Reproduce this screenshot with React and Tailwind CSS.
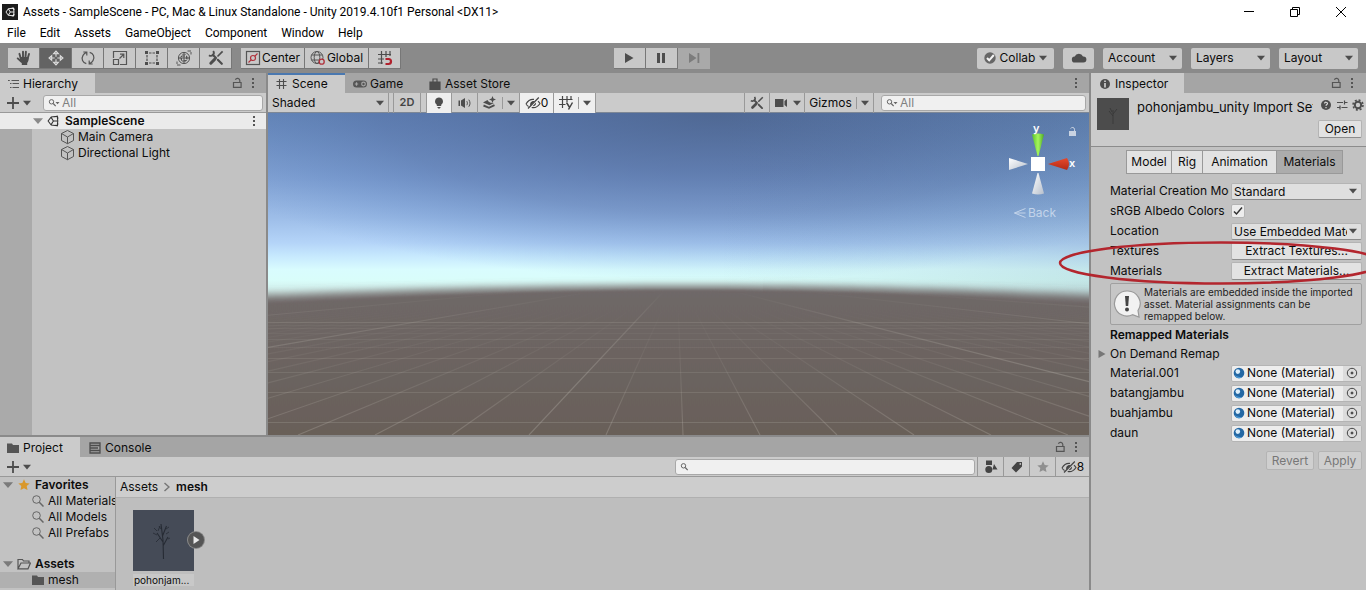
import React from "react";

/* ---------- icons ---------- */

function Svg({ children, className = "size-4", box = "0 0 16 16", sw = 1.2 }) {
  return (
    <svg
      viewBox={box}
      className={`shrink-0 ${className}`}
      fill="none"
      stroke="currentColor"
      strokeWidth={sw}
      aria-hidden="true"
    >
      {children}
    </svg>
  );
}

const Caret = ({ className = "w-2 h-2 text-[#4d4d4d]" }) => (
  <Svg box="0 0 8 8" className={className}>
    <path d="M0 1.8h8L4 6.4z" fill="currentColor" stroke="none" />
  </Svg>
);

const Dots = () => (
  <Svg className="size-4 text-[#555]">
    <g fill="currentColor" stroke="none">
      <rect x="7" y="3" width="2" height="2" />
      <rect x="7" y="7" width="2" height="2" />
      <rect x="7" y="11" width="2" height="2" />
    </g>
  </Svg>
);

const Lock = () => (
  <Svg className="size-4 text-[#555]">
    <path d="M4.5 7.5h7.6v4.9H4.5zM10.8 7.5V5.6a2.3 2.3 0 0 0-4.4-.9" />
  </Svg>
);

const HandIcon = () => (
  <Svg className="size-4 text-[#4d4d4d]" sw={1.9}>
    <path d="M4.9 9 3.4 3.8M7 8V1.6M9.4 8l.5-6.2M11.5 9l1.5-5M5.2 11.6 1.7 8.4" strokeLinecap="round" />
    <path d="M4.2 7h8.2c.6 2.500 0 4.600-1.200 5.900v2.100H5.800v-1.700c-1-1.200-2-3.700-1.600-6.300z" fill="currentColor" stroke="none" />
  </Svg>
);

const MoveIcon = () => (
  <Svg className="size-4 text-[#dcdcdc]" sw={1.1}>
    <path d="M8 3.500v9M3.500 8h9" strokeDasharray="3.200 2.600" />
    <path d="M5.600 3.700 8 1l2.400 2.700zM5.600 12.300 8 15l2.400-2.700zM3.700 5.600 1 8l2.700 2.400zM12.300 5.600 15 8l-2.700 2.400z" fill="currentColor" fillOpacity=".5" />
  </Svg>
);

const RotateIcon = () => (
  <Svg className="size-4 text-[#555]">
    <path d="M6.300 13.600C2.700 12.600.9 9 3 5.400 3.800 4 5 3 6.600 2.400M3.300 2h3.500v3.500M9.700 2.400c3.600 1 5.400 4.600 3.300 8.200-.8 1.400-2 2.400-3.600 3M12.700 14H9.200v-3.500" />
  </Svg>
);

const ScaleIcon = () => (
  <Svg className="size-4 text-[#555]">
    <path d="M1.500 8V1.500h13v13H8M1.500 9.500h5v5h-5zM7.500 8.500l4-4M8 4.200h3.800V8" />
  </Svg>
);

const RectIcon = () => (
  <Svg className="size-4 text-[#4d4d4d]">
    <path d="M3 5v6M13 5v6M5 3h6M5 13h6" strokeDasharray="2.500 1" />
    <path d="M1 1h3v3H1zM12 1h3v3h-3zM1 12h3v3H1zM12 12h3v3h-3z" fill="currentColor" stroke="none" />
  </Svg>
);

const TransformIcon = () => (
  <Svg className="size-4 text-[#555]" sw={1}>
    <circle cx="8" cy="8" r="5.600" />
    <path d="M8 3.500v9M3.500 8h9M6.500 5 8 3.500 9.500 5M6.500 11 8 12.500 9.500 11M5 6.500 3.500 8 5 9.500M11 6.500 12.500 8 11 9.500" />
    <path d="M11.500 1H15v3.500M4.500 15H1v-3.500M5.500 6h5v4.500h-5z" strokeDasharray="3.500 1" />
  </Svg>
);

const ToolsIcon = ({ className = "size-4 text-[#4d4d4d]" }) => (
  <Svg className={className} sw={2.200}>
    <path d="m5 5 3 3M9.800 9.800l4 4" strokeLinecap="round" />
    <path d="M14.600 1.400 9.500 6.500" strokeWidth="1.700" />
    <path d="m6.600 9.400-3.800 3.800" strokeWidth="3" strokeLinecap="round" />
    <path d="M5.200 1a3 3 0 0 1-4.200 4.200M4.600 4.600l1 1" strokeWidth="1.800" />
  </Svg>
);

const PivotIcon = () => (
  <Svg className="size-4 text-[#555]">
    <rect x="1.500" y="1.500" width="13" height="13" />
    <path d="m3.500 12.500 2.800-2.800M9.700 6.300l2.800-2.800" className="stroke-[#b0303a]" />
    <circle cx="8" cy="8" r="2.500" className="stroke-[#b0303a]" />
  </Svg>
);

const GlobeIcon = () => (
  <Svg className="size-4 text-[#555]" sw={1}>
    <circle cx="7" cy="7.500" r="6" />
    <ellipse cx="7" cy="7.500" rx="2.800" ry="6" />
    <path d="M1.500 5h11M1.500 10h8" />
    <circle cx="11.700" cy="11.700" r="2.500" className="fill-[#c8c8c8] stroke-[#b0303a]" strokeWidth="1.300" />
  </Svg>
);

const SnapIcon = () => (
  <Svg className="size-4 text-[#4d4d4d]">
    <path d="M4.500 1v13M9 1v6M13 1v5M1 4.500h13M1 9h6M1 13h5" />
    <path d="M8.500 9h3a2.400 2.400 0 0 1 0 5h-3" className="stroke-[#b0202c]" strokeWidth="2.200" />
  </Svg>
);

const HierarchyIcon = () => (
  <Svg className="size-3 text-[#555]" box="0 0 12 12" sw={1}>
    <path d="M3.500 2.500H11M4.500 5.500H11M4.500 9.500H11M0 2.500h1.800M2 5.500h1.500M2 9.500h1.500" />
  </Svg>
);

const PlusMenu = ({ label }) => (
  <button type="button" aria-label={label} className="flex items-center gap-1 text-[#4d4d4d]">
    <Svg className="size-3" box="0 0 12 12" sw={1.800}>
      <path d="M6 0v12M0 6h12" />
    </Svg>
    <Caret />
  </button>
);

const Magnifier = ({ menu = false }) => (
  <Svg className="w-3 h-3 text-[#666]" box="0 0 12 12" sw={1}>
    <circle cx="3.500" cy="4.800" r="2.200" />
    <path d="m5.200 6.500 2.500 2.700" strokeWidth="1.200" />
    {menu && <path d="M7.500 5h4L9.500 7.200z" fill="currentColor" stroke="none" />}
  </Svg>
);

const UnityIcon = ({ className }) => (
  <Svg className={className} sw={1.400}>
    <path d="M8.500 8h6M8.500 8 5.300 2.800M8.500 8l-3.200 5.200M10.500 2.200l3.300-.6.9 3.400M10.500 13.800l3.300.6.9-3.400M5.500 2.700 1.500 8l4 5.300M13.600 1.800 14.400 8l-.8 6.200M5.300 2.800l8.300-1M5.300 13.200l8.300 1" />
  </Svg>
);

const CubeIcon = () => (
  <Svg className="size-4 text-[#555]" sw={1}>
    <path d="M7.500 1.500 13.500 4.500v7L7.500 14.700 1.500 11.500v-7zM1.500 4.500 7.500 8l6-3.500M7.500 8v6.700" />
  </Svg>
);

const GridIcon = () => (
  <Svg className="size-3 text-[#4d4d4d]" box="0 0 12 12" sw={1.100}>
    <path d="M3.500 1v10M7.500 1v10M.5 3.500h10M.5 7.500h10" />
  </Svg>
);

const GameIcon = () => (
  <Svg className="w-4 h-4 text-[#555]">
    <rect x="1" y="4.500" width="14" height="7" rx="3.500" fill="currentColor" stroke="none" />
    <path d="M2.800 8h3.400M4.500 6.300v3.400" className="stroke-[#a5a5a5]" />
    <circle cx="11.500" cy="8" r="1.800" className="stroke-[#a5a5a5]" />
  </Svg>
);

const StoreIcon = () => (
  <Svg className="size-3 text-[#4d4d4d]" box="0 0 12 12">
    <path d="M1 4h10v7.500H1z" fill="currentColor" />
    <path d="M4 4V1h4v3" />
  </Svg>
);

const BulbIcon = () => (
  <Svg className="size-4 text-[#4d4d4d]">
    <path d="M8 2.500a4 4 0 0 0-2.200 7.300V11h4.400V9.800A4 4 0 0 0 8 2.500zM6.200 12h3.600l-1 1.600H7.200z" fill="currentColor" stroke="none" />
  </Svg>
);

const AudioIcon = () => (
  <Svg className="size-4 text-[#4d4d4d]" sw={1}>
    <path d="M1.500 5.500H3V11H1.500zM4 5.500 8 3v10l-4-2.500z" fill="currentColor" stroke="none" />
    <path d="M9.800 6.200c.8 1.400.8 2.600 0 4M11.800 4.700c1.600 2.400 1.600 4.600 0 7" />
  </Svg>
);

const LayersFxIcon = () => (
  <Svg className="size-4 text-[#4d4d4d]">
    <path d="M1 7.500 5.500 5l1 1.500 2 1.200 3.500.3-4.500 2.300z" fill="currentColor" stroke="none" />
    <path d="m10.500 1 1 2.500 2.500 1-2.500 1-1 2.500-1-2.500-2.500-1 2.500-1z" fill="currentColor" stroke="none" />
    <path d="M1.500 10.500 7 12.800l5.500-2.600" strokeWidth="1.900" />
  </Svg>
);

const HiddenIcon = () => (
  <Svg className="size-4 text-[#444]">
    <path d="M1 9c2-3.500 5-5 8-4.600M13 6.200c.8.6 1.400 1.400 2 2.300-2.400 3.600-5.400 4.700-8.300 4M3.500 11.500C2.500 10.900 1.700 10 1 9M13.800 2.500 3 13.500" />
    <path d="M9.500 6 5.500 10.800C4.400 8.500 6 5.600 9.500 6zM11 7.500 7.500 11.200c2.500 0 3.900-1.500 3.500-3.700z" fill="currentColor" stroke="none" />
  </Svg>
);

const GridAxisIcon = () => (
  <Svg className="size-4 text-[#444]">
    <path d="M4.500 1v12M9 1v6M13 1v4M1 4.500h13.500M1 9.500h6.500" />
    <path d="m8.500 7.500 2.800 4.500M14.500 7.500l-4 7" strokeWidth="1.500" />
  </Svg>
);

const CameraIcon = () => (
  <Svg className="size-4 text-[#4d4d4d]">
    <path d="M2 4h8.500v8H2zM14 4v8l-2.500-2V6z" fill="currentColor" stroke="none" />
  </Svg>
);

const FolderIcon = () => (
  <Svg className="size-3 text-[#555]" box="0 0 12 12">
    <path d="M0 1.500h5l1 1.500h6v8H0z" fill="currentColor" stroke="none" />
  </Svg>
);

const FolderOpenIcon = () => (
  <Svg className="size-3.5 text-[#555]" box="0 0 14 14">
    <path d="M1 11.500v-9h4.500L6.500 4H12v2M1 11.800 4 6h9.500L11 11.800z" />
  </Svg>
);

const ConsoleIcon = () => (
  <Svg className="size-3 text-[#4d4d4d]" box="0 0 12 12" sw={1.300}>
    <path d="M1 1h10v10H1zM1 3.500h10M1 6h8M1 8.500h10" />
  </Svg>
);

const StarIcon = ({ className }) => (
  <Svg className={className} box="0 0 12 12">
    <path d="m6 .2 1.700 3.700 4 .5-3 2.700.8 4L6 9.200l-3.500 1.900.8-4-3-2.700 4-.5z" fill="currentColor" stroke="none" />
  </Svg>
);

const SearchTreeIcon = () => (
  <Svg className="size-3 text-[#666]" box="0 0 12 12" sw={1}>
    <circle cx="4.500" cy="4.500" r="3.800" />
    <path d="m7.300 7.300 4.200 4.200" strokeWidth="1.500" />
  </Svg>
);

const ShapesIcon = () => (
  <Svg className="size-4 text-[#444]">
    <g fill="currentColor" stroke="none">
      <path d="M3 1.500h6v4.500H3zM11 5l3.500 5.500H9.500z" />
      <circle cx="5.800" cy="10.500" r="3.500" />
    </g>
  </Svg>
);

const TagIcon = () => (
  <Svg className="size-4 text-[#444]">
    <path d="M8 3h5v4.500l-6 6L2.500 9zM11.300 4.100a.8.8 0 1 0 0 1.700.8.8 0 0 0 0-1.700z" fill="currentColor" stroke="none" fillRule="evenodd" />
  </Svg>
);

const SphereIcon = () => (
  <Svg className="size-3" box="0 0 12 12">
    <circle cx="6" cy="6" r="5.300" className="fill-[#2468a4]" stroke="none" />
    <path d="M1.500 8A5 5 0 0 0 9 10.300C5.500 10 3 9 1.500 8z" className="fill-[#4f9bd6]" stroke="none" />
    <circle cx="4.800" cy="4.600" r="2.300" className="fill-[#dff0fb]" stroke="none" />
  </Svg>
);

/* ---------- shared controls ---------- */

function ToolButton({ label, active, children, className = "w-8" }) {
  return (
    <button
      type="button"
      aria-label={label}
      className={`flex h-[21px] items-center justify-center border-r border-b border-[#777] ${
        active ? "bg-[#636363]" : "bg-[#c8c8c8]"
      } ${className}`}
    >
      {children}
    </button>
  );
}

function Select({ label, options, id, className, caret = "right-2" }) {
  return (
    <span className={`relative flex items-center ${className}`}>
      <select
        id={id}
        aria-label={id ? undefined : label}
        className="h-full w-full appearance-none overflow-hidden bg-transparent pr-3.5 outline-none"
      >
        {options.map((o) => (
          <option key={o}>{o}</option>
        ))}
      </select>
      <span className={`pointer-events-none absolute ${caret}`}>
        <Caret />
      </span>
    </span>
  );
}

function SearchBox({ label, placeholder, menu, className }) {
  return (
    <label
      className={`flex h-4 items-center rounded-[3px] border border-[#a8a8a8] bg-[#f0f0f0] pl-1 ${className}`}
    >
      <Magnifier menu={menu} />
      <input
        type="text"
        aria-label={label}
        placeholder={placeholder}
        className="ml-0.5 h-full w-full min-w-0 bg-transparent text-xs placeholder:text-[#808080] outline-none"
      />
    </label>
  );
}

function Tab({ icon, label, active, className = "" }) {
  return (
    <button
      type="button"
      role="tab"
      aria-selected={!!active}
      className={`flex h-5 items-center border-t-2 ${
        active ? "bg-[#cbcbcb]" : "border-transparent"
      } ${className}`}
    >
      {icon}
      {label}
    </button>
  );
}

/* ---------- window chrome ---------- */

function TitleBar() {
  return (
    <header className="bg-white font-['Roboto',sans-serif] text-xs text-black">
      <div className="flex h-[23px] items-center pr-5 pl-0.5">
        <span className="flex size-4 items-center justify-center bg-[#1c1c1c]">
          <UnityIcon className="size-2.5 text-white" />
        </span>
        <h1 className="ml-[5px] flex-1 whitespace-nowrap">
          Assets - SampleScene - PC, Mac &amp; Linux Standalone - Unity 2019.4.10f1 Personal &lt;DX11&gt;
        </h1>
        <div className="flex gap-9">
          <button type="button" aria-label="Minimize">
            <Svg className="size-2.5" box="0 0 10 10" sw={1}>
              <path d="M0 4.500h10" />
            </Svg>
          </button>
          <button type="button" aria-label="Restore">
            <Svg className="size-2.5" box="0 0 10 10" sw={1}>
              <path d="M.5 2.500h7v7h-7zM2.500 2.500v-2h7v7h-2" />
            </Svg>
          </button>
          <button type="button" aria-label="Close">
            <Svg className="size-2.5" box="0 0 10 10" sw={1}>
              <path d="m0 0 10 10M10 0 0 10" />
            </Svg>
          </button>
        </div>
      </div>
      <nav className="flex h-5 items-center gap-3.5 pl-[7px]">
        {["File", "Edit", "Assets", "GameObject", "Component", "Window", "Help"].map((m) => (
          <button key={m} type="button">
            {m}
          </button>
        ))}
      </nav>
    </header>
  );
}

function Toolbar() {
  const tools = [
    ["Hand tool", <HandIcon />],
    ["Move tool", <MoveIcon />],
    ["Rotate tool", <RotateIcon />],
    ["Scale tool", <ScaleIcon />],
    ["Rect tool", <RectIcon />],
    ["Transform tool", <TransformIcon />],
    ["Custom tools", <ToolsIcon />],
  ];
  return (
    <div className="flex h-[30px] items-center bg-[#8a8a8a] px-2">
      <div className="flex">
        {tools.map(([label, icon], i) => (
          <ToolButton key={label} label={label} active={i === 1}>
            {icon}
          </ToolButton>
        ))}
      </div>
      <div className="ml-[9px] flex">
        <ToolButton className="w-16">
          <PivotIcon />
          <span className="ml-px">Center</span>
        </ToolButton>
        <ToolButton className="w-16">
          <GlobeIcon />
          <span className="ml-px">Global</span>
        </ToolButton>
        <ToolButton label="Grid snapping" className="w-8">
          <SnapIcon />
        </ToolButton>
      </div>
      <div className="flex flex-1 justify-center pr-[55px]">
        <ToolButton label="Play">
          <Svg className="size-4 text-[#4d4d4d]">
            <path d="m4 3 8.500 5L4 13z" fill="currentColor" stroke="none" />
          </Svg>
        </ToolButton>
        <ToolButton label="Pause">
          <Svg className="size-4 text-[#4d4d4d]">
            <path d="M4 3h3v10H4zM9 3h3v10H9z" fill="currentColor" stroke="none" />
          </Svg>
        </ToolButton>
        <button type="button" aria-label="Step" className="flex h-[21px] w-8 items-center justify-center bg-[#a9a9a9]">
          <Svg className="size-4 text-[#7c7c7c]">
            <path d="m3 3 7.500 5L3 13zM11.500 3h1.800v10h-1.800z" fill="currentColor" stroke="none" />
          </Svg>
        </button>
      </div>
      <div className="flex gap-[9px]">
        <button type="button" className="flex h-[21px] w-[77px] items-center justify-center gap-1 rounded-xs bg-[#c8c8c8]">
          <Svg className="size-3" box="0 0 12 12">
            <circle cx="6" cy="6" r="5.700" className="fill-[#666]" stroke="none" />
            <path d="m3 6 2.200 2.300L9.800 3" className="stroke-[#f4f4f4]" strokeWidth="2" />
          </Svg>
          Collab
          <Caret />
        </button>
        <button type="button" aria-label="Cloud services" className="flex h-[21px] w-[31px] items-center justify-center rounded-xs bg-[#c8c8c8]">
          <Svg className="size-4 text-[#4d4d4d]">
            <path d="M4 12.500a3 3 0 0 1-.3-6 4.500 4.500 0 0 1 8.300 0h.4a3 3 0 0 1 0 6z" fill="currentColor" stroke="none" />
          </Svg>
        </button>
        {["Account", "Layers", "Layout"].map((t) => (
          <Select
            key={t}
            label={t}
            options={[t]}
            caret="right-[5px]"
            className="h-[21px] w-[79px] rounded-xs bg-[#c8c8c8] pl-[5px]"
          />
        ))}
      </div>
    </div>
  );
}

/* ---------- hierarchy ---------- */

function Hierarchy() {
  return (
    <section aria-label="Hierarchy" className="flex w-[266px] shrink-0 flex-col bg-[#c2c2c2]">
      <div className="flex h-5 items-center bg-[#a5a5a5]">
        <Tab icon={<HierarchyIcon />} label="Hierarchy" active className="w-[95px] gap-[3px] border-[#cbcbcb] pl-2" />
        <span className="ml-auto flex pr-[5px]">
          <button type="button" aria-label="Lock hierarchy"><Lock /></button>
          <button type="button" aria-label="Hierarchy options"><Dots /></button>
        </span>
      </div>
      <div className="flex h-5 items-center gap-3 border-b border-[#999] bg-[#cbcbcb] pr-[3px] pl-[7px]">
        <PlusMenu label="Create" />
        <SearchBox label="Search hierarchy" placeholder="All" menu className="flex-1" />
      </div>
      <div className="flex h-4 items-center bg-[#ebebeb] pr-1 pl-[33px] font-semibold">
        <Caret className="size-2.5 text-[#8a8a8a]" />
        <UnityIcon className="ml-1 size-3 text-[#333]" />
        <span className="ml-1.5 flex-1">SampleScene</span>
        <button type="button" aria-label="Scene options"><Dots /></button>
      </div>
      <div className="flex flex-1">
        <div className="w-8 bg-[#aaa]" />
        <ul className="pl-7">
          {["Main Camera", "Directional Light"].map((n) => (
            <li key={n} className="flex h-4 items-center gap-0.5">
              <CubeIcon />
              {n}
            </li>
          ))}
        </ul>
      </div>
    </section>
  );
}

/* ---------- scene ---------- */

function SceneCanvas() {
  const cols = Array.from({ length: 61 }, (_, k) => k - 30);
  const rows = [
    [209, 0.2], [212, 0.08], [215, 0.1], [220, 0.08], [226, 0.12],
    [234, 0.1], [245, 0.16], [259, 0.18], [279, 0.2], [309, 0.24],
  ];
  return (
    <svg viewBox="0 0 821 322" preserveAspectRatio="none" className="absolute inset-0 size-full" aria-hidden="true">
      <defs>
        <linearGradient id="sky" x1="0" y1="0" x2="0" y2="180" gradientUnits="userSpaceOnUse">
          <stop offset="0" stopColor="#6786b6" />
          <stop offset=".35" stopColor="#82a2d3" />
          <stop offset=".58" stopColor="#9dbde8" />
          <stop offset=".72" stopColor="#b4d4f8" />
          <stop offset=".8" stopColor="#c8eafe" />
          <stop offset=".87" stopColor="#d9fcfe" />
          <stop offset=".93" stopColor="#d9fdfa" />
          <stop offset="1" stopColor="#cfe9e6" />
        </linearGradient>
        <radialGradient id="zenith" cx="0" cy="0" r="1" gradientUnits="userSpaceOnUse" gradientTransform="translate(450 0) scale(560 168)">
          <stop offset="0" stopColor="#475e88" stopOpacity=".75" />
          <stop offset=".35" stopColor="#496396" stopOpacity=".58" />
          <stop offset=".6" stopColor="#4c6aa2" stopOpacity=".42" />
          <stop offset=".8" stopColor="#5078b8" stopOpacity=".22" />
          <stop offset="1" stopColor="#5a88c8" stopOpacity="0" />
        </radialGradient>
        <linearGradient id="dusk" x1="450" y1="0" x2="821" y2="0" gradientUnits="userSpaceOnUse">
          <stop offset="0" stopColor="#4f7285" stopOpacity="0" />
          <stop offset="1" stopColor="#4f7285" stopOpacity=".16" />
        </linearGradient>
        <linearGradient id="ground" x1="0" y1="170" x2="0" y2="322" gradientUnits="userSpaceOnUse">
          <stop offset="0" stopColor="#6f6868" />
          <stop offset="1" stopColor="#696059" />
        </linearGradient>
        <linearGradient id="fadeMinor" x1="0" y1="195" x2="0" y2="322" gradientUnits="userSpaceOnUse">
          <stop offset="0" stopColor="#a8a49c" stopOpacity="0" />
          <stop offset=".4" stopColor="#a8a49c" stopOpacity=".12" />
          <stop offset="1" stopColor="#b8b2aa" stopOpacity=".32" />
        </linearGradient>
        <linearGradient id="fadeMajor" x1="0" y1="178" x2="0" y2="260" gradientUnits="userSpaceOnUse">
          <stop offset="0" stopColor="#b4b0a8" stopOpacity="0" />
          <stop offset=".4" stopColor="#b4b0a8" stopOpacity=".2" />
          <stop offset="1" stopColor="#b4b0a8" stopOpacity=".34" />
        </linearGradient>
        <filter id="haze" x="-10%" y="-20%" width="120%" height="140%">
          <feGaussianBlur stdDeviation="0 4" />
        </filter>
        <filter id="horizon" x="-10%" y="-20%" width="120%" height="140%">
          <feGaussianBlur stdDeviation="0 1" />
        </filter>
      </defs>
      <rect width="821" height="322" fill="url(#sky)" />
      <rect width="821" height="322" fill="url(#zenith)" />
      <rect width="821" height="322" fill="url(#dusk)" />
      <path d="M-40 184C150 176 300 173 420 173S680 176 860 184V360H-40z" fill="#6f6868" filter="url(#haze)" />
      <path d="M-40 193C150 182 300 177 420 177S680 182 860 193V360H-40z" fill="url(#ground)" filter="url(#horizon)" />
      {cols.map((k) => {
        const major = (k + 2) % 10 === 0;
        const x = 415 + k * 77;
        const top = major ? 180 : 195;
        const t = (top - 164) / 158;
        return (
          <path
            key={k}
            d={`M${409 + (x - 409) * t} ${top}L${x} 322`}
            stroke={major ? "url(#fadeMajor)" : "url(#fadeMinor)"}
            strokeWidth="1.1"
          />
        );
      })}
      {rows.map(([y, o]) => (
        <path key={y} d={`M0 ${y}.5H821`} stroke="#b8b2aa" strokeOpacity={o} />
      ))}
    </svg>
  );
}

function OrientationGizmo() {
  return (
    <div className="absolute top-2 right-0 flex w-20 flex-col items-center text-[#d5e0ee]">
      <svg viewBox="0 0 80 80" className="size-20" aria-hidden="true">
        <defs>
          <linearGradient id="coneX" x1="0" y1="0" x2="0" y2="1">
            <stop offset="0" stopColor="#e8492c" />
            <stop offset="1" stopColor="#b22a16" />
          </linearGradient>
          <linearGradient id="coneG" x1="0" y1="0" x2="1" y2="0">
            <stop offset="0" stopColor="#58c02c" />
            <stop offset=".5" stopColor="#a6f65c" />
            <stop offset="1" stopColor="#4aa826" />
          </linearGradient>
          <linearGradient id="coneW" x1="0" y1="0" x2="1" y2="1">
            <stop offset="0" stopColor="#fff" />
            <stop offset="1" stopColor="#b6bfcc" />
          </linearGradient>
        </defs>
        <path d="M23 13.500q6-2 12 0L29.500 35h-1z" fill="url(#coneG)" />
        <path d="M28.500 52h1l5.500 20.500q-6 2-12 0z" fill="url(#coneW)" />
        <path d="M0 37v12L19 43z" fill="url(#coneW)" />
        <path d="M39 43l19-6q4 6 0 12z" fill="url(#coneX)" />
        <rect x="22" y="36" width="14" height="14" fill="#fff" />
        <g className="fill-white font-['Inter',sans-serif] text-[11px] font-semibold">
          <text x="24" y="11">y</text>
          <text x="60" y="46">x</text>
        </g>
        <g transform="translate(59 5)">
          <rect x="1" y="5" width="7" height="5" fill="#c9d3e2" />
          <path d="M6.500 5V3.200a2 2 0 0 0-3.800-.6" fill="none" stroke="#c9d3e2" />
        </g>
      </svg>
      <button type="button" className="mt-1 flex items-center gap-0.5 self-start pl-[5px] text-[#c3d4ea]">
        <Svg className="size-3" box="0 0 12 12" sw={1}>
          <path d="M11.500 1.500.5 6l11 4.500M.5 6h11" />
        </Svg>
        Back
      </button>
    </div>
  );
}

function ViewButton({ label, lit, className = "", children }) {
  return (
    <button
      type="button"
      aria-label={label}
      className={`flex h-5 items-center justify-center border-r border-[#999] ${lit ? "bg-[#efefef]" : ""} ${className}`}
    >
      {children}
    </button>
  );
}

const Bar = () => <span className="mx-1 h-3 w-px bg-[#999]" />;

function Scene() {
  return (
    <section aria-label="Scene" className="flex min-w-0 flex-1 flex-col">
      <div className="flex h-5 items-center bg-[#a5a5a5]">
        <Tab icon={<GridIcon />} label="Scene" active className="w-[77px] gap-1 border-[#4a78b0] pl-2" />
        <Tab icon={<GameIcon />} label="Game" className="w-[76px] gap-0.5 pl-[7px]" />
        <Tab icon={<StoreIcon />} label="Asset Store" className="gap-1 pl-2" />
        <span className="ml-auto pr-[5px]">
          <button type="button" aria-label="Scene view options" className="flex"><Dots /></button>
        </span>
      </div>
      <div className="flex h-5 items-center border-b border-[#7d8796] bg-[#cbcbcb]">
        <Select label="Shading mode" options={["Shaded"]} caret="right-1" className="h-5 w-[121px] border-r border-[#999] pl-1" />
        <ViewButton className="ml-1 w-7 border-l text-[11px] font-semibold text-[#444]">2D</ViewButton>
        <ViewButton label="Scene lighting" lit className="ml-[5px] w-[26px] border-l"><BulbIcon /></ViewButton>
        <ViewButton label="Scene audio" className="w-[26px]"><AudioIcon /></ViewButton>
        <ViewButton label="Scene effects" className="w-[42px]"><LayersFxIcon /><Bar /><Caret /></ViewButton>
        <ViewButton lit className="w-[34px]"><HiddenIcon />0</ViewButton>
        <ViewButton label="Grid" lit className="w-[42px]"><GridAxisIcon /><Bar /><Caret /></ViewButton>
        <span className="flex-1" />
        <ViewButton label="Component tools" className="w-[26px] border-l"><ToolsIcon className="size-3.5 text-[#4d4d4d]" /></ViewButton>
        <ViewButton label="Scene camera" className="w-[35px] gap-1"><CameraIcon /><Caret /></ViewButton>
        <ViewButton className="w-[69px]">Gizmos<Bar /><Caret /></ViewButton>
        <SearchBox label="Search scene" placeholder="All" menu className="mr-[3px] ml-[7px] w-[205px]" />
      </div>
      <div className="relative flex-1 overflow-hidden">
        <SceneCanvas />
        <OrientationGizmo />
      </div>
    </section>
  );
}

/* ---------- project ---------- */

function AssetThumb() {
  return (
    <svg viewBox="0 0 61 61" className="size-[61px] bg-[#454b57]" aria-hidden="true">
      <g fill="none" stroke="#262b34" strokeWidth=".8">
        <path d="M30.500 49 30 30 28 14M30 36l5-9M30 32l-6-9M29.500 26l4-10" strokeWidth="1.100" />
        <path d="m24 25-4-2M35 29l2-1M25 21l2-5M33 19l3-2M21 18l3 3M27 28l-4 4M26 16l2 3M33 24l3-2" />
      </g>
    </svg>
  );
}

function Project() {
  return (
    <section aria-label="Project" className="flex h-[153px] shrink-0 flex-col bg-[#c2c2c2]">
      <div className="flex h-5 shrink-0 items-center bg-[#a5a5a5]">
        <Tab icon={<FolderIcon />} label="Project" active className="w-20 gap-1 border-[#cbcbcb] pl-[7px]" />
        <Tab icon={<ConsoleIcon />} label="Console" className="gap-1 pl-[9px]" />
        <span className="ml-auto flex pr-[5px]">
          <button type="button" aria-label="Lock project"><Lock /></button>
          <button type="button" aria-label="Project options"><Dots /></button>
        </span>
      </div>
      <div className="flex h-5 shrink-0 items-center border-b border-[#999] bg-[#cbcbcb] pl-[7px]">
        <PlusMenu label="Create asset" />
        <SearchBox label="Search project" className="mr-0.5 ml-auto w-[300px]" />
        <ViewButton label="Search by type" className="w-[27px] border-l"><ShapesIcon /></ViewButton>
        <ViewButton label="Search by label" className="w-[26px]"><TagIcon /></ViewButton>
        <ViewButton label="Favorites" className="w-[26px]"><StarIcon className="size-3 text-[#8f8f8f]" /></ViewButton>
        <button type="button" className="flex w-[33px] items-center justify-center"><HiddenIcon />8</button>
      </div>
      <div className="flex min-h-0 flex-1">
        <div className="w-[116px] shrink-0 overflow-hidden border-r border-[#999] whitespace-nowrap">
          <div className="flex h-4 items-center gap-[5px] pl-[3px] font-semibold">
            <Caret className="size-2.5 text-[#7a7a7a]" />
            <StarIcon className="size-3 text-[#d9982c]" />
            Favorites
          </div>
          {["All Materials", "All Models", "All Prefabs"].map((t) => (
            <div key={t} className="flex h-4 items-center gap-1 pl-8">
              <SearchTreeIcon />
              {t}
            </div>
          ))}
          <div className="mt-[15px] flex h-4 items-center gap-1 pl-[3px] font-semibold">
            <Caret className="size-2.5 text-[#7a7a7a]" />
            <FolderOpenIcon />
            Assets
          </div>
          <div className="flex h-4 items-center gap-1 bg-[#b0b0b0] pl-8">
            <FolderIcon />
            mesh
          </div>
        </div>
        <div className="min-w-0 flex-1 bg-[#bebebe]">
          <div className="flex h-[21px] items-center gap-1.5 border-b border-[#b0b0b0] bg-[#cdcdcd] pl-1">
            <a href="#assets">Assets</a>
            <Svg className="h-2.5 w-1.5 text-[#777]" box="0 0 6 10" sw={1.500}>
              <path d="m.5 1 4.500 4-4.500 4" />
            </Svg>
            <span className="font-semibold">mesh</span>
          </div>
          <figure className="relative mt-3 ml-[17px] w-[61px]">
            <AssetThumb />
            <button
              type="button"
              aria-label="Expand asset"
              className="absolute top-[22px] -right-2.5 flex size-4 items-center justify-center rounded-full bg-[#555] ring-1 ring-[#8a8a8a]"
            >
              <Svg className="size-2" box="0 0 8 8">
                <path d="m1.500 0 6 4-6 4z" className="fill-[#e8e8e8]" stroke="none" />
              </Svg>
            </button>
            <figcaption className="mt-[3px] truncate bg-[#c8c8c8] pl-px text-[10px] leading-3">pohonjam...</figcaption>
          </figure>
        </div>
      </div>
    </section>
  );
}

/* ---------- inspector ---------- */

const plainButton =
  "rounded-xs border border-[#b4b4b4] border-b-[#8c8c8c] bg-[#e2e2e2] text-center whitespace-nowrap overflow-hidden";

function Field({ label, id, children }) {
  return (
    <div className="flex h-5 items-center">
      <label htmlFor={id} className="w-[119px] shrink-0 overflow-hidden whitespace-nowrap">
        {label}
      </label>
      <div className="ml-0.5 flex min-w-0 flex-1 items-center">{children}</div>
    </div>
  );
}

const fieldSelect =
  "h-[17px] w-full rounded-xs border border-[#b4b4b4] border-b-[#8c8c8c] bg-[#dfdfdf] pl-0.5";

function Inspector() {
  return (
    <aside aria-label="Inspector" className="flex w-[275px] shrink-0 flex-col bg-[#c2c2c2]">
      <div className="flex h-5 items-center bg-[#a5a5a5]">
        <Tab
          active
          label="Inspector"
          className="w-[93px] gap-1 border-[#cbcbcb] pl-2"
          icon={
            <Svg className="size-3" box="0 0 12 12">
              <circle cx="6" cy="6" r="5" className="fill-[#4d4d4d]" stroke="none" />
              <path d="M6 2.500v1.600M6 5v4.500" className="stroke-[#e0e0e0]" strokeWidth="1.500" />
            </Svg>
          }
        />
        <span className="ml-auto flex pr-1.5">
          <button type="button" aria-label="Lock inspector"><Lock /></button>
          <button type="button" aria-label="Inspector options"><Dots /></button>
        </span>
      </div>

      <div className="flex h-[54px] gap-2 border-b border-[#8c8c8c] bg-[#cbcbcb] pt-[5px] pl-1.5">
        <svg viewBox="0 0 32 32" className="size-8 shrink-0 bg-[#4c4c4c]" aria-hidden="true">
          <path d="M16 26V12M16 18l-4-5M16 16l4-5M13 10l2 4" fill="none" stroke="#3a3a3a" />
        </svg>
        <div className="flex min-w-0 flex-1 flex-col items-end">
          <div className="flex h-[22px] w-full items-start">
            <h2 className="min-w-0 flex-1 overflow-hidden text-[13px] leading-[18px] whitespace-nowrap">
              pohonjambu_unity Import Settings
            </h2>
            <span className="ml-1.5 flex gap-0.5 pr-px text-[#4d4d4d]">
              <button type="button" aria-label="Help">
                <Svg className="size-3.5" box="0 0 14 14">
                  <circle cx="7" cy="7" r="5" fill="currentColor" stroke="none" />
                  <path d="M5.500 5.500c.2-1.800 3-1.600 3 0 0 1-1.500 1-1.500 2.300M7 9v1.300" className="stroke-[#dcdcdc]" />
                </Svg>
              </button>
              <button type="button" aria-label="Presets">
                <Svg className="size-3.5" box="0 0 14 14">
                  <path d="M2 4.500h6M10 4.500h2.500M9.500 2.500v4M2 9.500h2.500M6.500 9.500h6M5 7.500v4" />
                </Svg>
              </button>
              <button type="button" aria-label="Settings">
                <Svg className="size-3.5" box="0 0 14 14">
                  <circle cx="7" cy="7" r="3.200" strokeWidth="2" />
                  <circle cx="7" cy="7" r="5" strokeWidth="1.500" strokeDasharray="2 1.927" />
                </Svg>
              </button>
            </span>
          </div>
          <button type="button" className={`mr-1 h-[18px] w-[44px] leading-4 ${plainButton}`}>Open</button>
        </div>
      </div>

      <div role="tablist" className="mt-[3px] ml-[35px] flex h-6">
        {[
          ["Model", "w-[46px]"],
          ["Rig", "w-[31px]"],
          ["Animation", "w-[74px]"],
          ["Materials", "w-[66px]"],
        ].map(([t, w], i) => (
          <button
            key={t}
            type="button"
            role="tab"
            aria-selected={i === 3}
            className={`border-y border-r border-[#999] ${i === 0 ? "border-l" : ""} ${
              i === 3 ? "bg-[#acacac]" : "bg-[#e2e2e2]"
            } ${w}`}
          >
            {t}
          </button>
        ))}
      </div>

      <div className="mt-[7px] flex flex-col pr-1 pl-[19px]">
        <Field label="Material Creation Mode" id="creation">
          <Select id="creation" options={["Standard"]} caret="right-1" className={fieldSelect} />
        </Field>
        <Field label="sRGB Albedo Colors" id="srgb">
          <span className="relative flex size-3.5 items-center justify-center">
            <input
              id="srgb"
              type="checkbox"
              defaultChecked
              className="peer absolute inset-0 appearance-none rounded-xs border border-[#b4b4b4] bg-[#ededed]"
            />
            <Svg className="pointer-events-none relative size-2.5 text-[#333] opacity-0 peer-checked:opacity-100" box="0 0 10 10" sw={1.500}>
              <path d="m1 5.500 2.500 2.500L9 1.500" />
            </Svg>
          </span>
        </Field>
        <Field label="Location" id="location">
          <Select id="location" options={["Use Embedded Materials"]} caret="right-1" className={fieldSelect} />
        </Field>
        <Field label="Textures" id="tex">
          <button id="tex" type="button" className={`h-[18px] w-full leading-4 ${plainButton}`}>Extract Textures...</button>
        </Field>
        <Field label="Materials" id="mat">
          <button id="mat" type="button" className={`h-[18px] w-full leading-4 ${plainButton}`}>Extract Materials...</button>
        </Field>

        <div className="mt-0.5 flex h-[42px] items-center gap-[3px] rounded-xs border border-[#a0a0a0] bg-[#c6c6c6] pl-0.5">
          <Svg className="size-7" box="0 0 28 28">
            <path d="M14 1a12.500 12.500 0 1 0 5.500 23.700L26 27l-1-6.500A12.500 12.500 0 0 0 14 1z" className="fill-[#f2f2f2] stroke-[#999]" />
            <path d="M12 6h4l-.8 10h-2.400z" className="fill-[#444]" stroke="none" />
            <circle cx="14" cy="19.500" r="2" className="fill-[#444]" stroke="none" />
          </Svg>
          <p className="min-w-0 flex-1 text-[10px] leading-3 text-[#222]">
            Materials are embedded inside the imported asset. Material assignments can be remapped below.
          </p>
        </div>

        <h3 className="flex h-5 items-center font-semibold">Remapped Materials</h3>
        <details className="group -ml-3">
          <summary className="flex h-[18px] cursor-pointer list-none items-center gap-1">
            <Svg className="size-2 text-[#777]" box="0 0 8 8">
              <path d="m.5 0 7 4-7 4z" fill="currentColor" stroke="none" />
            </Svg>
            On Demand Remap
          </summary>
        </details>

        {["Material.001", "batangjambu", "buahjambu", "daun"].map((m) => (
          <Field key={m} label={m} id={m}>
            <button
              id={m}
              type="button"
              className="flex h-[17px] w-full items-center rounded-xs border border-[#b4b4b4] bg-[#ededed] whitespace-nowrap"
            >
              <span className="flex min-w-0 flex-1 items-center gap-0.5 overflow-hidden pl-px">
                <SphereIcon />
                None (Material)
              </span>
              <span className="flex h-full w-[18px] items-center justify-center bg-[#dcdcdc]">
                <Svg className="size-3 text-[#444]" box="0 0 12 12" sw={1}>
                  <circle cx="6" cy="6" r="4.700" />
                  <circle cx="6" cy="6" r="1" fill="currentColor" />
                </Svg>
              </span>
            </button>
          </Field>
        ))}

        <div className="mt-2 flex justify-end gap-1 text-[#777]">
          {[["Revert", "w-12"], ["Apply", "w-11"]].map(([t, w]) => (
            <button key={t} type="button" disabled className={`h-[19px] rounded-xs border border-[#b4b4b4] bg-[#cfcfcf] ${w}`}>
              {t}
            </button>
          ))}
        </div>
      </div>
    </aside>
  );
}

export default function App() {
  return (
    <div className="relative flex h-screen flex-col overflow-hidden bg-[#8a8a8a] font-['Inter',sans-serif] text-xs text-[#0c0c0c]">
      <TitleBar />
      <Toolbar />
      <main className="flex min-h-0 flex-1 gap-0.5">
        <div className="flex min-w-0 flex-1 flex-col gap-0.5">
          <div className="flex min-h-0 flex-1 gap-0.5">
            <Hierarchy />
            <Scene />
          </div>
          <Project />
        </div>
        <Inspector />
      </main>
      <svg
        viewBox="0 0 308 48"
        className="pointer-events-none absolute top-[239px] right-0 h-12 w-[308px]"
        aria-hidden="true"
      >
        <ellipse cx="163" cy="24" rx="161" ry="20.500" fill="none" stroke="#b3262e" strokeWidth="2.500" />
      </svg>
    </div>
  );
}
